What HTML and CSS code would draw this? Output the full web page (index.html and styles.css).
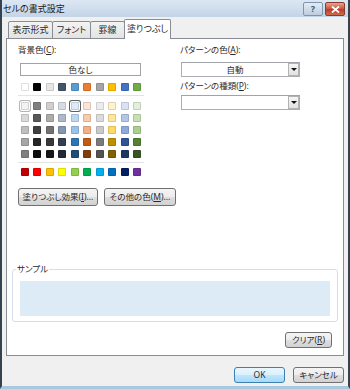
FILE: index.html
```html
<!DOCTYPE html>
<html lang="ja">
<head>
    <meta charset="UTF-8">
    <meta name="viewport" content="width=device-width, initial-scale=1.0">
    <title>セルの書式設定</title>
    <link rel="stylesheet" href="styles.css">
</head>
<body>
    <div class="window">
        <div class="titlebar">
            <span class="title">セルの書式設定</span>
            <div class="caption-buttons">
                <span class="cap help">?</span>
                <span class="cap close">
                    <svg width="9" height="7" viewBox="0 0 9 7">
                        <path d="M1 0.5 L8 6.5 M8 0.5 L1 6.5" stroke="#fff" stroke-width="1.8" fill="none"/>
                    </svg>
                </span>
            </div>
        </div>

        <div class="client">
            <div class="tabs">
                <div class="tab t-number">表示形式</div>
                <div class="tab t-font">フォント</div>
                <div class="tab t-border">罫線</div>
                <div class="tab t-fill active">塗りつぶし</div>
            </div>

            <div class="panel">
                <div class="fill-top">
                    <div class="bg-col">
                        <div class="label">背景色(<u>C</u>):</div>
                        <div class="none-box">色なし</div>
                        <div class="swatches" id="themeRow"></div>
                        <div class="sep"></div>
                        <div class="swatches tints" id="tintRows"></div>
                        <div class="sep"></div>
                        <div class="swatches standard" id="standardRow"></div>
                        <div class="btn-row">
                            <button class="btn effects">塗りつぶし効果(<u>I</u>)...</button>
                            <button class="btn more">その他の色(<u>M</u>)...</button>
                        </div>
                    </div>

                    <div class="pattern-col">
                        <div class="label">パターンの色(<u>A</u>):</div>
                        <div class="dropdown">
                            <span class="dd-text">自動</span>
                            <span class="dd-arrow"><i></i></span>
                        </div>
                        <div class="label second">パターンの種類(<u>P</u>):</div>
                        <div class="dropdown second">
                            <span class="dd-text"></span>
                            <span class="dd-arrow"><i></i></span>
                        </div>
                    </div>
                </div>

                <fieldset class="sample">
                    <legend>サンプル</legend>
                    <div class="sample-fill"></div>
                </fieldset>

                <div class="clear-row">
                    <button class="btn clear">クリア(<u>R</u>)</button>
                </div>
            </div>

            <div class="dialog-buttons">
                <button class="btn ok">OK</button>
                <button class="btn cancel">キャンセル</button>
            </div>
        </div>
    </div>

    <script>
        var theme = ['#ffffff', '#000000', '#e7e6e6', '#44546a', '#5b9bd5', '#ed7d31', '#a5a5a5', '#ffc000', '#4472c4', '#70ad47'];
        var tints = [
            ['#f2f2f2', '#7f7f7f', '#d0cece', '#d6dce4', '#ddebf7', '#fce4d6', '#ededed', '#fff2cc', '#d9e1f2', '#e2efda'],
            ['#d9d9d9', '#595959', '#aeabab', '#adb9ca', '#bdd7ee', '#f8cbad', '#dbdbdb', '#ffe699', '#b4c6e7', '#c6e0b4'],
            ['#bfbfbf', '#404040', '#757171', '#8497b0', '#9bc2e6', '#f4b084', '#c9c9c9', '#ffd966', '#8ea9db', '#a9d08e'],
            ['#a6a6a6', '#262626', '#3a3838', '#333f4f', '#2f75b5', '#c65911', '#7b7b7b', '#bf8f00', '#305496', '#548235'],
            ['#808080', '#0d0d0d', '#161616', '#222a35', '#1f4e78', '#833c0c', '#525252', '#806000', '#203764', '#375623']
        ];
        var standard = ['#c00000', '#ff0000', '#ffc000', '#ffff00', '#92d050', '#00b050', '#00b0f0', '#0070c0', '#002060', '#7030a0'];

        function addSwatches(el, colors) {
            var list = [];
            colors.forEach(function(c) {
                var s = document.createElement('span');
                s.className = 'swatch';
                s.style.backgroundColor = c;
                el.appendChild(s);
                list.push(s);
            });
            return list;
        }

        addSwatches(document.getElementById('themeRow'), theme);
        var tintEl = document.getElementById('tintRows');
        var firstRow = addSwatches(tintEl, tints[0]);
        for (var i = 1; i < tints.length; i++) {
            addSwatches(tintEl, tints[i]);
        }
        addSwatches(document.getElementById('standardRow'), standard);

        firstRow[0].classList.add('hover');
        firstRow[4].classList.add('selected');
    </script>
</body>
</html>
```

FILE: styles.css
```css
body {
    margin: 0;
    font-family: "Noto Sans", "Noto Sans CJK JP", sans-serif;
    font-size: 8.5px;
    font-feature-settings: "palt" 1; /* narrow kana like Meiryo UI */
    color: #2a2a2a;
}

.window {
    width: 350px;
    height: 389px;
    box-sizing: border-box;
    border-left: 2px solid #34434f;
    border-right: 2px solid #34434f;
    border-bottom: 3px solid #a9c7dd;
    background-color: #f0f0f0;
    display: flex;
    flex-direction: column;
}

/* title bar */
.titlebar {
    height: 17px;
    flex-shrink: 0;
    display: flex;
    justify-content: space-between;
    align-items: flex-start;
    padding: 0 3px 0 1px;
    background: linear-gradient(#dce7f3, #c3d4e7);
}
.title {
    line-height: 17px;
    font-size: 9px;
    color: #1b1b1b;
}
.caption-buttons {
    display: flex;
    gap: 2px;
    margin-top: 2px;
}
.cap {
    width: 20px;
    height: 14px;
    box-sizing: border-box;
    border-radius: 2px;
    display: flex;
    align-items: center;
    justify-content: center;
}
.cap.help {
    border: 1px solid #7f95ad;
    background: linear-gradient(#e3ecf6, #bccde0);
    color: #43586f;
    font-size: 9px;
    font-weight: bold;
    line-height: 12px;
}
.cap.close {
    border: 1px solid #8a3b2d;
    background: linear-gradient(#e5a393, #c9533c 50%, #b83b25 51%, #cf6a4c);
}

/* client area */
.client {
    flex: 1;
    padding: 2px 4px 0 4px;
}

.tabs {
    display: flex;
    align-items: flex-end;
    height: 20px;
    padding-left: 2px;
    margin-bottom: -1px;
    position: relative;
    z-index: 1;
}
.tab {
    height: 18px;
    box-sizing: border-box;
    border: 1px solid #898c95;
    border-radius: 2px 2px 0 0;
    background: linear-gradient(#f3f3f3, #e3e3e3);
    text-align: center;
    line-height: 16px;
    font-size: 9px;
    white-space: nowrap;
    margin-left: -1px;
}
.tab:first-child {
    margin-left: 0;
}
.t-number { width: 45px; }
.t-font { width: 39px; }
.t-border { width: 35px; }
.t-fill { width: 47px; }
.tab.active {
    height: 20px;
    border-bottom: none;
    background: #fff;
    line-height: 18px;
    position: relative;
    z-index: 2;
}

.panel {
    height: 318px;
    box-sizing: border-box;
    border: 1px solid #898c95;
    background-color: #fff;
    padding-top: 5px;
}

.fill-top {
    display: flex;
    padding-left: 11px;
}
.bg-col {
    width: 162px;
}
.label {
    line-height: 12px;
    white-space: nowrap;
}

.none-box {
    width: 121px;
    height: 13px;
    box-sizing: border-box;
    margin: 7px 0 0 2px;
    border: 1px solid #a3a3a3;
    text-align: center;
    line-height: 11px;
}

.swatches {
    width: 120px;
    margin: 7px 0 0 3px;
    display: grid;
    grid-template-columns: repeat(10, 8px);
    justify-content: space-between;
    row-gap: 4px;
}
.swatches.tints {
    margin-top: 6px;
}
.swatches.standard {
    margin-top: 5px;
}
.swatch {
    display: block;
    width: 8px;
    height: 8px;
    box-sizing: border-box;
    border: 1px solid rgba(0, 0, 0, 0.13);
    border-radius: 1px;
}
.swatch.hover {
    box-shadow: 0 0 0 1px #fff, 0 0 0 2px #b4b4b4;
}
.swatch.selected {
    box-shadow: 0 0 0 1px #fff, 0 0 0 2px #5f5f5f;
}

.sep {
    width: 126px;
    height: 1px;
    margin-top: 4px;
    background-color: #e3e3e3;
}

.btn {
    font-family: inherit;
    font-size: 8.5px;
    font-feature-settings: "palt" 1;
    color: #2a2a2a;
    padding: 0;
    box-sizing: border-box;
    border: 1px solid #707070;
    border-radius: 3px;
    background: linear-gradient(#f4f4f4, #ececec 50%, #dedede 51%, #d2d2d2);
    line-height: 14px;
    white-space: nowrap;
}

.btn-row {
    display: flex;
    gap: 6px;
    margin-top: 12px;
}
.btn.effects {
    width: 80px;
    height: 18px;
}
.btn.more {
    width: 72px;
    height: 18px;
}

/* pattern */
.pattern-col {
    width: 120px;
}
.label.second {
    margin-top: 3px;
}
.dropdown {
    display: flex;
    width: 119px;
    height: 15px;
    box-sizing: border-box;
    margin: 6px 0 0 1px;
    border: 1px solid #abadb3;
    border-top-color: #a0a3aa;
}
.dropdown.second {
    margin-top: 3px;
}
.dd-text {
    flex: 1;
    text-align: center;
    line-height: 13px;
}
.dd-arrow {
    width: 11px;
    box-sizing: border-box;
    border: 1px solid #b3b3b3;
    background: linear-gradient(#f5f5f5, #e2e2e2);
    display: flex;
    align-items: center;
    justify-content: center;
}
.dd-arrow i {
    width: 0;
    height: 0;
    border-left: 3px solid transparent;
    border-right: 3px solid transparent;
    border-top: 3px solid #111;
}

/* sample */
.sample {
    margin: 57px 5px 0 5px;
    padding: 6px 7px 5px 7px;
    border: 1px solid #d5dfe5;
    border-radius: 3px;
}
.sample legend {
    padding: 0 1px;
    margin-left: -4px;
    line-height: 12px;
}
.sample-fill {
    height: 35px;
    background-color: #ddebf7;
}

.clear-row {
    display: flex;
    justify-content: flex-end;
    margin-top: 10px;
    padding-right: 11px;
}
.btn.clear {
    width: 47px;
    height: 16px;
}

.dialog-buttons {
    display: flex;
    justify-content: flex-end;
    gap: 8px;
    margin-top: 11px;
}
.btn.ok,
.btn.cancel {
    width: 51px;
    height: 16px;
}
.btn.ok {
    border-color: #3c7fb1;
    background: linear-gradient(#eaf6fd, #d9f0fc 50%, #bee6fd 51%, #a7d9f5);
}
```
